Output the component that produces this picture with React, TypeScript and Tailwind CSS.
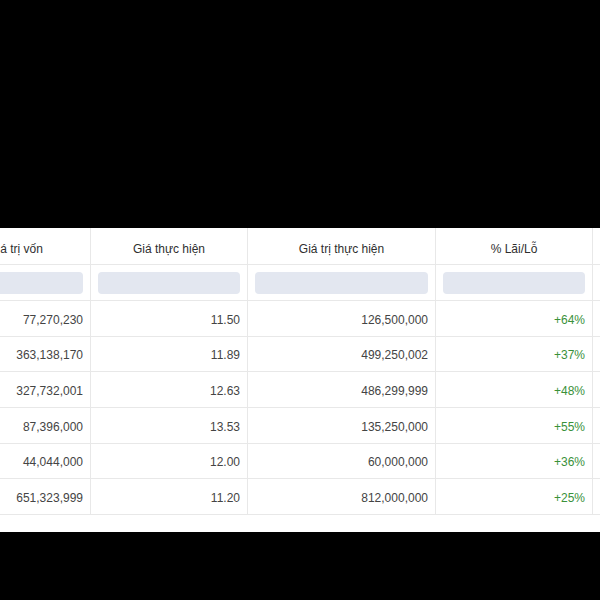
import React from 'react';

const rows = [
  { von: '77,270,230', gia: '11.50', thucHien: '126,500,000', pct: '+64%' },
  { von: '363,138,170', gia: '11.89', thucHien: '499,250,002', pct: '+37%' },
  { von: '327,732,001', gia: '12.63', thucHien: '486,299,999', pct: '+48%' },
  { von: '87,396,000', gia: '13.53', thucHien: '135,250,000', pct: '+55%' },
  { von: '44,044,000', gia: '12.00', thucHien: '60,000,000', pct: '+36%' },
  { von: '651,323,999', gia: '11.20', thucHien: '812,000,000', pct: '+25%' },
];

const headers = ['Giá trị vốn', 'Giá thực hiện', 'Giá trị thực hiện', '% Lãi/Lỗ', ''];

const cols = 'grid grid-cols-[150px_157px_188px_157px_150px]';

const App: React.FC = () => {
  return (
    <div className="w-[600px] h-[600px] flex flex-col bg-black overflow-hidden font-['Liberation_Sans',Arial,sans-serif]">
      <div className="h-[228px] shrink-0 bg-black" />

      <div className="bg-white pb-[17px] overflow-hidden">
        <div className="-ml-[59px] w-max">
          {/* Header */}
          <div className={`${cols} h-[37px]`}>
            {headers.map((h, i) => (
              <div
                key={i}
                className="flex items-center justify-center pt-[5px] border-r border-b border-[#e8e8e8] text-[12px] text-[#2f2f2f]"
              >
                {h}
              </div>
            ))}
          </div>

          {/* Filter row */}
          <div className={`${cols} h-[36px]`}>
            {headers.map((_, i) => (
              <div key={i} className="flex items-center px-[7px] border-r border-b border-[#e8e8e8]">
                <div className="w-full h-[22px] rounded-[4px] bg-[#e3e7f0]" />
              </div>
            ))}
          </div>

          {/* Data rows */}
          {rows.map((r, i) => (
            <div key={i} className={`${cols} h-[35.67px] text-[12px] text-[#444]`}>
              <div className="flex items-center justify-end pr-[7px] pt-[3px] border-r border-b border-[#e8e8e8]">{r.von}</div>
              <div className="flex items-center justify-end pr-[7px] pt-[3px] border-r border-b border-[#e8e8e8]">{r.gia}</div>
              <div className="flex items-center justify-end pr-[7px] pt-[3px] border-r border-b border-[#e8e8e8]">{r.thucHien}</div>
              <div className="flex items-center justify-end pr-[7px] pt-[3px] border-r border-b border-[#e8e8e8] text-[#3a913a]">{r.pct}</div>
              <div className="border-r border-b border-[#e8e8e8]" />
            </div>
          ))}
        </div>
      </div>

      <div className="flex-1 bg-black" />
    </div>
  );
};

export default App;
